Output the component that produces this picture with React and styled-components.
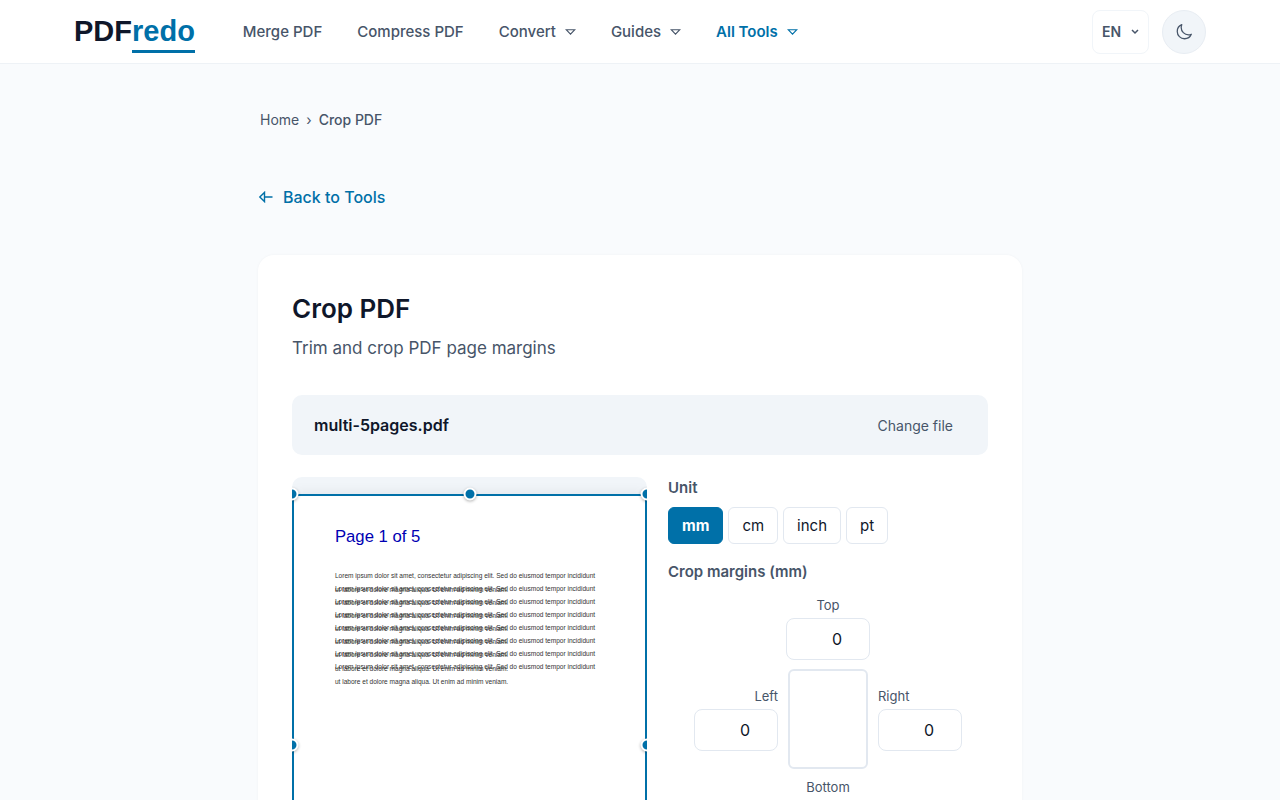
import React, { useState } from 'react'
import styled, { createGlobalStyle } from 'styled-components'

const GlobalStyle = createGlobalStyle`
* {
  box-sizing: border-box;
}
body {
  margin: 0;
  background: #f9fbfd;
  color: #0f172a;
  font-family: Inter, "Liberation Sans", sans-serif;
  font-size: 16px;
  line-height: 26px;
}
button, input, select {
  font-family: inherit;
}
`

const Header = styled.header`
  background: #fff;
  border-bottom: 1px solid #eef2f6;
`

const HeaderInner = styled.div`
  display: flex;
  align-items: center;
  max-width: 1200px;
  height: 63px;
  margin: 0 auto;
  padding: 0 34px;
`

const Logo = styled.a`
  display: flex;
  padding-top: 2px;
  color: #0f172a;
  font-family: "Liberation Sans", sans-serif;
  font-size: 29px;
  font-weight: 700;
  line-height: 38px;
  text-decoration: none;

  span {
    color: #0070a8;
    border-bottom: 3px solid #0070a8;
  }
`

const Nav = styled.nav`
  display: flex;
  gap: 35px;
  margin-left: 48px;
`

const NavLink = styled.a`
  display: flex;
  align-items: center;
  gap: 9px;
  color: ${p => (p.$active ? '#0070a8' : '#475569')};
  font-size: 15px;
  font-weight: ${p => (p.$active ? 600 : 500)};
  line-height: 24px;
  text-decoration: none;
`

const HeaderRight = styled.div`
  display: flex;
  gap: 13px;
  margin-left: auto;
`

const LangBox = styled.label`
  display: grid;
  align-items: center;
  width: 57px;
  height: 44px;
  border: 1px solid #f1f5f9;
  border-radius: 8px;
  color: #475569;

  select, svg {
    grid-area: 1 / 1;
  }
  svg {
    justify-self: end;
    margin-right: 9px;
    pointer-events: none;
  }
`

const LangSelect = styled.select`
  appearance: none;
  width: 100%;
  height: 100%;
  padding: 0 9px;
  border: 0;
  background: none;
  color: #475569;
  font-size: 14px;
  font-weight: 600;
`

const ThemeButton = styled.button`
  display: flex;
  align-items: center;
  justify-content: center;
  width: 44px;
  height: 44px;
  padding: 0;
  border: 1px solid #e8edf3;
  border-radius: 50%;
  background: #f1f5f9;
  color: #475569;
`

const Main = styled.main`
  max-width: 764px;
  margin: 0 auto;
  padding: 43px 0 55px;
`

const Breadcrumb = styled.nav`
  display: flex;
  gap: 7px;
  padding: 0 2px;
  color: #475569;
  font-size: 14px;

  a {
    color: inherit;
    text-decoration: none;
  }
  b {
    font-weight: 500;
  }
`

const BackLink = styled.a`
  display: inline-flex;
  align-items: center;
  gap: 10px;
  margin: 51px 0 45px;
  color: #0070a8;
  font-weight: 500;
  text-decoration: none;
`

const Card = styled.section`
  padding: 34px;
  border-radius: 16px;
  background: #fff;
  box-shadow: 0 0 3px rgba(15, 23, 42, 0.04);
`

const Title = styled.h1`
  margin: 0;
  font-size: 26px;
  font-weight: 600;
  line-height: 40px;
`

const Subtitle = styled.p`
  margin: 6px 0 34px;
  color: #475569;
  font-size: 17px;
`

const FileRow = styled.div`
  display: flex;
  align-items: center;
  justify-content: space-between;
  height: 60px;
  padding: 0 22px;
  border-radius: 10px;
  background: #f1f5f9;

  strong {
    font-weight: 600;
  }
`

const ChangeButton = styled.button`
  padding: 8px 13px;
  border: 0;
  background: none;
  color: #475569;
  font-size: 14px;
`

const Columns = styled.div`
  display: grid;
  grid-template-columns: 1fr 320px;
  align-items: start;
  gap: 21px;
  margin-top: 22px;
`

const Preview = styled.div`
  overflow: hidden;
  padding: 17px 0;
  border-radius: 10px;
  background: #f1f5f9;
`

const Page = styled.div`
  position: relative;
  background: #fff;
  box-shadow: 0 0 13px rgba(15, 23, 42, 0.08);

  svg {
    display: block;
    width: 100%;
  }
`

const CropFrame = styled.div`
  position: absolute;
  inset: 0;
  border: 2px solid #0070a8;
`

const Handle = styled.button`
  position: absolute;
  top: ${p => p.$y};
  left: ${p => p.$x};
  width: 13px;
  height: 13px;
  padding: 0;
  border: 2px solid #fff;
  border-radius: 50%;
  background: #0070a8;
  box-shadow: 0 1px 3px rgba(0, 0, 0, 0.3);
  transform: translate(-50%, -50%);
`

const Group = styled.fieldset`
  min-width: 0;
  margin: 0 0 17px;
  padding: 0;
  border: 0;
`

const Legend = styled.legend`
  padding: 0;
  color: #475569;
  font-size: 15px;
  font-weight: 600;
  line-height: 22px;
`

const Units = styled.div`
  display: flex;
  gap: 5px;
  margin-top: 8px;
`

const UnitButton = styled.button`
  height: 37px;
  padding: 0 13px;
  border: 1px solid ${p => (p.$active ? '#0070a8' : '#e2e8f0')};
  border-radius: 6px;
  background: ${p => (p.$active ? '#0070a8' : '#fff')};
  color: ${p => (p.$active ? '#fff' : '#0f172a')};
  font-size: 15px;
  font-weight: ${p => (p.$active ? 700 : 400)};
`

const Margins = styled.div`
  display: grid;
  grid-template-columns: repeat(3, 84px);
  grid-template-areas: ". top ." "left page right" ". bottom .";
  align-items: center;
  justify-content: center;
  gap: 9px 8px;
  margin-top: 13px;
`

const MarginField = styled.label`
  display: flex;
  flex-direction: column;
  gap: 4px;
  grid-area: ${p => p.$side};
  color: #475569;
  font-size: 13px;
  line-height: 18px;
  text-align: ${p => p.$align};
`

const MarginInput = styled.input`
  width: 100%;
  height: 42px;
  padding: 0 12px;
  border: 1px solid #e2e8f0;
  border-radius: 8px;
  background: #fff;
  color: #0f172a;
  font-size: 16px;
  text-align: right;
`

const PageShape = styled.div`
  grid-area: page;
  justify-self: center;
  width: 80px;
  height: 100px;
  border: 2px solid #e2e8f0;
  border-radius: 6px;
`

const Caret = () => (
  <svg width="11" height="6" viewBox="0 0 11 6" fill="none" stroke="currentColor" strokeWidth="1.1">
    <path d="M1.2.7h8.6L5.5 5.1z" />
  </svg>
)

const links = [
  { label: 'Merge PDF' },
  { label: 'Compress PDF' },
  { label: 'Convert', menu: true },
  { label: 'Guides', menu: true },
  { label: 'All Tools', menu: true, active: true },
]

const handles = [
  ['0%', '0%'], ['50%', '0%'], ['100%', '0%'],
  ['0%', '50%'], ['100%', '50%'],
  ['0%', '100%'], ['50%', '100%'], ['100%', '100%'],
]

const sides = [
  { side: 'top', label: 'Top', align: 'center' },
  { side: 'left', label: 'Left', align: 'right' },
  { side: 'right', label: 'Right', align: 'left' },
  { side: 'bottom', label: 'Bottom', align: 'center' },
]

// A4 page in points, paragraphs start every 22pt but wrap at 24pt
function PdfPage() {
  return (
    <svg viewBox="0 0 595 842" fontFamily="Liberation Sans, sans-serif">
      <text x="72" y="80" fontSize="28" fill="#0000b3">Page 1 of 5</text>
      <g fontSize="11" fill="#333">
        {[0, 1, 2, 3, 4, 5, 6, 7].map(i => (
          <React.Fragment key={i}>
            <text x="72" y={140 + i * 22}>
              Lorem ipsum dolor sit amet, consectetur adipiscing elit. Sed do eiusmod tempor incididunt
            </text>
            <text x="72" y={164 + i * 22}>ut labore et dolore magna aliqua. Ut enim ad minim veniam.</text>
          </React.Fragment>
        ))}
      </g>
    </svg>
  )
}

function App() {
  const [unit, setUnit] = useState('mm')
  const [margins, setMargins] = useState({ top: 0, left: 0, right: 0, bottom: 0 })

  return (
    <>
      <GlobalStyle />
      <Header>
        <HeaderInner>
          <Logo href="#">PDF<span>redo</span></Logo>
          <Nav>
            {links.map(l => (
              <NavLink key={l.label} href="#" $active={l.active}>
                {l.label}
                {l.menu && <Caret />}
              </NavLink>
            ))}
          </Nav>
          <HeaderRight>
            <LangBox>
              <LangSelect aria-label="Language" defaultValue="EN">
                <option>EN</option>
              </LangSelect>
              <svg width="8" height="6" viewBox="0 0 8 6" fill="none" stroke="currentColor" strokeWidth="1.5">
                <path d="M1 1l3 3 3-3" />
              </svg>
            </LangBox>
            <ThemeButton type="button" aria-label="Dark mode">
              <svg width="18" height="18" viewBox="0 0 24 24" fill="none" stroke="currentColor" strokeWidth="1.7" strokeLinecap="round" strokeLinejoin="round">
                <path d="M21.752 15.002A9.72 9.72 0 0 1 18 15.75c-5.385 0-9.75-4.365-9.75-9.75 0-1.33.266-2.597.748-3.752A9.753 9.753 0 0 0 3 11.25C3 16.635 7.365 21 12.75 21a9.753 9.753 0 0 0 9.002-5.998z" />
              </svg>
            </ThemeButton>
          </HeaderRight>
        </HeaderInner>
      </Header>

      <Main>
        <Breadcrumb aria-label="Breadcrumb">
          <a href="#">Home</a>
          <span>›</span>
          <b>Crop PDF</b>
        </Breadcrumb>
        <BackLink href="#">
          <svg width="15" height="12" viewBox="0 0 15 12" fill="none" stroke="currentColor" strokeWidth="1.4">
            <path d="M6.5 1.4v9.2L1.8 6zM6.5 6h8" />
          </svg>
          Back to Tools
        </BackLink>

        <Card>
          <Title>Crop PDF</Title>
          <Subtitle>Trim and crop PDF page margins</Subtitle>
          <FileRow>
            <strong>multi-5pages.pdf</strong>
            <ChangeButton type="button">Change file</ChangeButton>
          </FileRow>

          <Columns>
            <Preview>
              <Page>
                <PdfPage />
                <CropFrame />
                {handles.map(([x, y]) => (
                  <Handle key={x + y} type="button" aria-label="Resize crop" $x={x} $y={y} />
                ))}
              </Page>
            </Preview>

            <div>
              <Group>
                <Legend>Unit</Legend>
                <Units>
                  {['mm', 'cm', 'inch', 'pt'].map(u => (
                    <UnitButton key={u} type="button" $active={u === unit} onClick={() => setUnit(u)}>
                      {u}
                    </UnitButton>
                  ))}
                </Units>
              </Group>
              <Group>
                <Legend>Crop margins ({unit})</Legend>
                <Margins>
                  {sides.map(s => (
                    <MarginField key={s.side} $side={s.side} $align={s.align}>
                      {s.label}
                      <MarginInput
                        type="number"
                        value={margins[s.side]}
                        onChange={e => setMargins({ ...margins, [s.side]: e.target.value })}
                      />
                    </MarginField>
                  ))}
                  <PageShape />
                </Margins>
              </Group>
            </div>
          </Columns>
        </Card>
      </Main>
    </>
  )
}

export default App
